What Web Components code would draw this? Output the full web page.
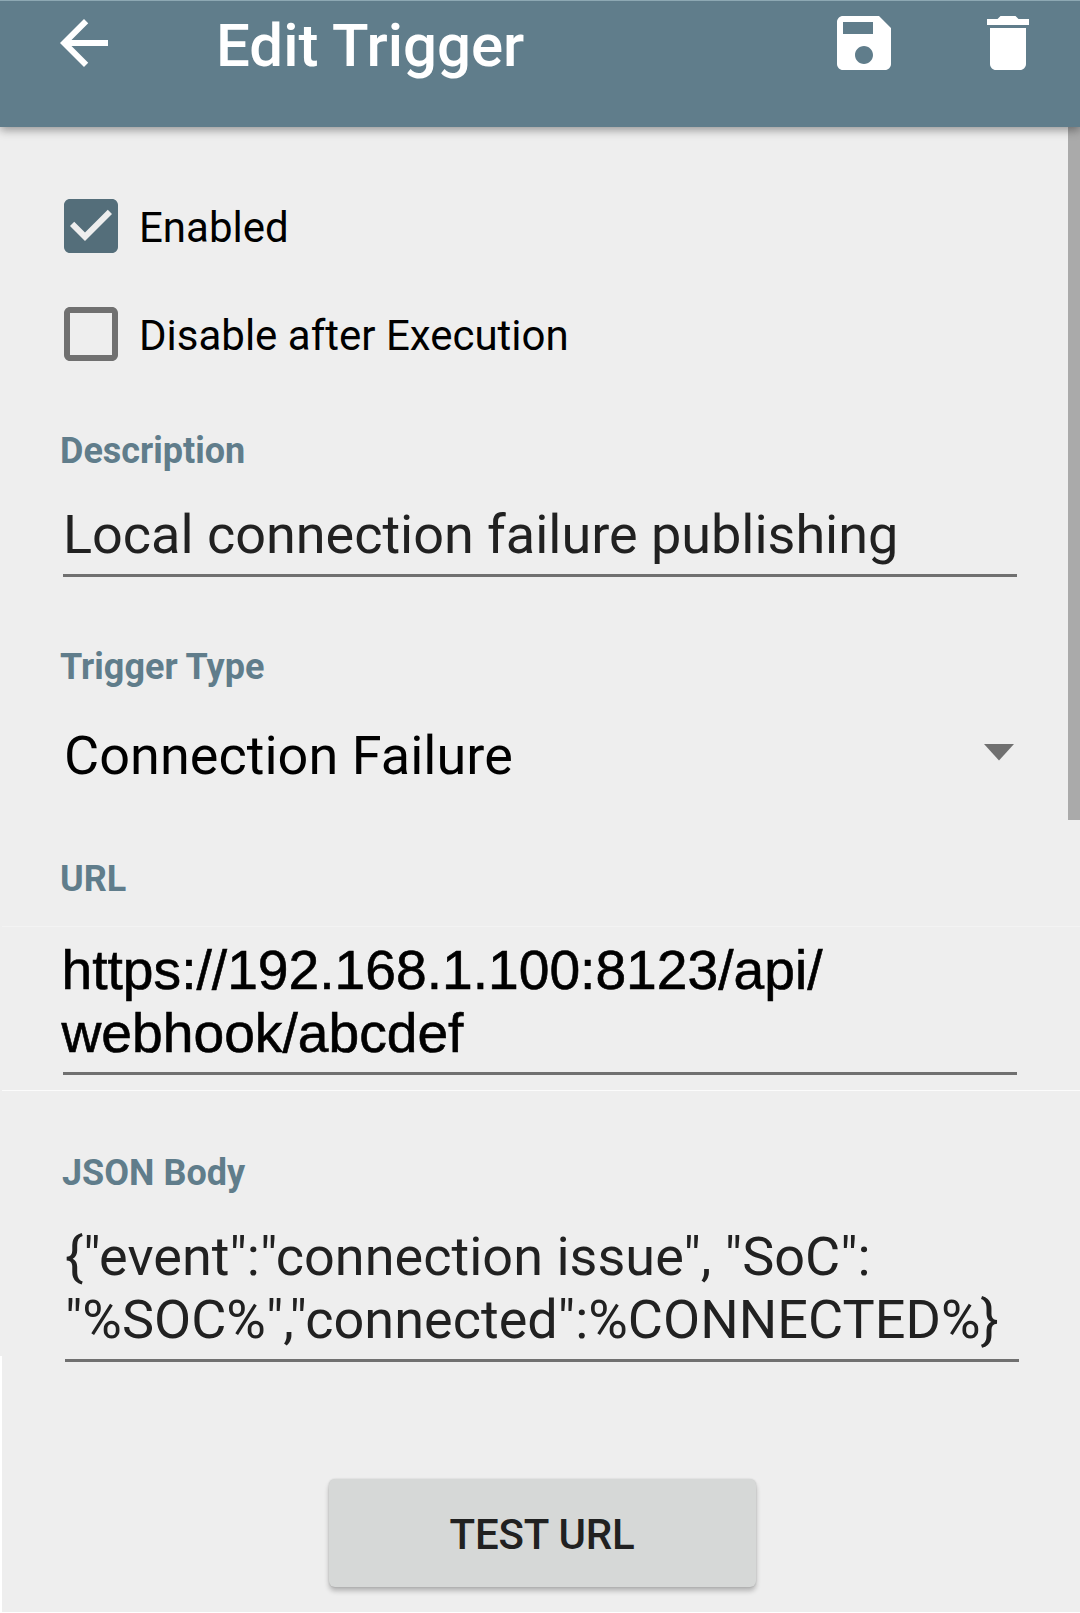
<!DOCTYPE html>
<html lang="en">
<head>
<meta charset="utf-8">
<title>Edit Trigger</title>
<style>
html,body{margin:0;padding:0;background:#eee}
body{font-family:Roboto,"Liberation Sans",sans-serif}
</style>
</head>
<body>
<edit-screen>
  <app-bar slot="bar">Edit Trigger</app-bar>
  <check-row checked>Enabled</check-row>
  <check-row>Disable after Execution</check-row>
  <form-field style="margin-top:60px" label="Description">Local connection failure publishing</form-field>
  <drop-down style="margin-top:69px" label="Trigger Type">Connection Failure</drop-down>
  <form-field class="url" style="margin-top:71px" label="URL" outlined>https://192.168.1.100:8123/api/<br>webhook/abcdef</form-field>
  <form-field class="json" style="margin-top:61px" label="JSON Body">{"event":"connection issue", "SoC":<br>"%SOC%","connected":%CONNECTED%}</form-field>
  <raised-button>TEST URL</raised-button>
</edit-screen>
<script>
const define = (name, html, setup) => {
  const t = document.createElement('template');
  t.innerHTML = html;
  customElements.define(name, class extends HTMLElement {
    constructor() {
      super();
      this.attachShadow({mode: 'open'}).append(t.content.cloneNode(true));
    }
    connectedCallback() { if (setup) setup(this, this.shadowRoot); }
  });
};
const setLabel = (el, root) => { root.querySelector('.label').textContent = el.getAttribute('label'); };
const labelCss = `.label{font-weight:700;font-size:36px;line-height:42px;color:#607d8b;margin-left:var(--label-x,60px);white-space:nowrap}`;

define('edit-screen', `
<style>
:host{display:flex;flex-direction:column;position:relative;width:1080px;height:1613px;background:#eee;overflow:hidden}
main{display:flex;flex-direction:column;padding-top:63px}
.scroll{position:absolute;right:0;top:127px;width:12px;height:693px;background:#aaa}
.edge{position:absolute;left:0;top:1356px;width:2px;bottom:0;background:#fff}
.foot{position:absolute;left:0;right:0;bottom:0;height:1px;background:#fff}
</style>
<slot name="bar"></slot>
<main><slot></slot></main>
<div class="scroll"></div><div class="edge"></div><div class="foot"></div>`);

define('app-bar', `
<style>
:host{display:flex;align-items:flex-start;box-sizing:border-box;height:127px;padding:6px 36px 0 48px;background:#607d8b;border-top:1px solid #8da8b3;color:#fff;box-shadow:0 3px 9px rgba(0,0,0,.38);position:relative;z-index:1}
svg{width:72px;height:72px;fill:#fff;flex:none}
.title{flex:1;margin:4px 0 0 96px;font-weight:500;font-size:60px;line-height:70px;white-space:nowrap}
.save{margin-right:72px}
</style>
<svg viewBox="0 0 24 24"><path d="M20 11H7.83l5.59-5.59L12 4l-8 8 8 8 1.41-1.41L7.83 13H20v-2z"/></svg>
<div class="title"><slot></slot></div>
<svg class="save" viewBox="0 0 24 24"><path fill-rule="evenodd" d="M17 3H5c-1.11 0-2 .9-2 2v14c0 1.1.89 2 2 2h14c1.1 0 2-.9 2-2V7l-4-4zm-5 16c-1.66 0-3-1.34-3-3s1.34-3 3-3 3 1.34 3 3-1.34 3-3 3zm3-10H5V5h10v4z"/></svg>
<svg viewBox="0 0 24 24"><path d="M6 19c0 1.1.9 2 2 2h8c1.1 0 2-.9 2-2V7H6v12zM19 4h-3.5l-1-1h-5l-1 1H5v2h14V4z"/></svg>`);

define('check-row', `
<style>
:host{display:flex;align-items:flex-start;height:72px;margin-left:55px;color:#000}
:host(:not([checked])){margin-top:36px}
svg{width:72px;height:72px;flex:none}
.on{display:none;fill:#546e7a}
.off{fill:#707070}
:host([checked]) .on{display:block}
:host([checked]) .off{display:none}
span{margin:13px 0 0 12px;font-size:42px;line-height:50px;white-space:nowrap}
</style>
<svg class="on" viewBox="0 0 24 24"><path d="M19 3H5c-1.11 0-2 .9-2 2v14c0 1.1.89 2 2 2h14c1.11 0 2-.9 2-2V5c0-1.1-.89-2-2-2zm-9 14l-5-5 1.41-1.41L10 14.17l7.59-7.59L19 8l-9 9z"/></svg>
<svg class="off" viewBox="0 0 24 24"><path d="M19 5v14H5V5h14m0-2H5c-1.1 0-2 .9-2 2v14c0 1.1.9 2 2 2h14c1.1 0 2-.9 2-2V5c0-1.1-.9-2-2-2z"/></svg>
<span><slot></slot></span>`);

define('form-field', `
<style>
:host{display:block;color:#212121}
${labelCss}
.zone{padding-top:31px}
.value{width:954px;margin-left:63px;padding-bottom:8px;border-bottom:3px solid #707070;font-size:54px;line-height:63px;letter-spacing:-.02px;white-space:nowrap}
:host([outlined]) .zone{margin:26px 0 0 2px;padding:12px 0 15px;border-top:1px solid #f3f3f3;border-bottom:1px solid #fbfbfb}
:host([outlined]) .value{margin-left:61px;padding-bottom:7px;font-family:"Liberation Sans",Arial,sans-serif;font-size:55.2px;letter-spacing:0;color:#000;-webkit-text-stroke:.6px #000}
:host([outlined]) .text{margin-left:-1.5px}
:host(.json){--label-x:62px}
:host(.json) .value{margin-left:65px;letter-spacing:.03px}
</style>
<div class="label"></div>
<div class="zone"><div class="value"><div class="text"><slot></slot></div></div></div>`, setLabel);

define('drop-down', `
<style>
:host{display:block;color:#000}
${labelCss}
.row{display:flex;justify-content:space-between;align-items:flex-start;margin:36px 66px 0 64px;font-size:54px;line-height:63px;letter-spacing:.04px}
svg{width:30px;height:17px;margin-top:20px;fill:#707070}
</style>
<div class="label"></div>
<div class="row"><span><slot></slot></span><svg viewBox="0 0 30 17"><path d="M0 0h30L15 16.5z"/></svg></div>`, setLabel);

define('raised-button', `
<style>
:host{display:flex;align-items:center;justify-content:center;align-self:flex-start;box-sizing:border-box;width:427px;height:108px;margin:117px 0 0 328.5px;padding-top:4px;background:#d6d8d7;border-radius:6px;box-shadow:0 4px 5px rgba(0,0,0,.24),0 0 2px rgba(0,0,0,.16);color:#212121;font-weight:500;font-size:42px;line-height:50px;letter-spacing:-.2px}
</style>
<slot></slot>`);
</script>
</body>
</html>
